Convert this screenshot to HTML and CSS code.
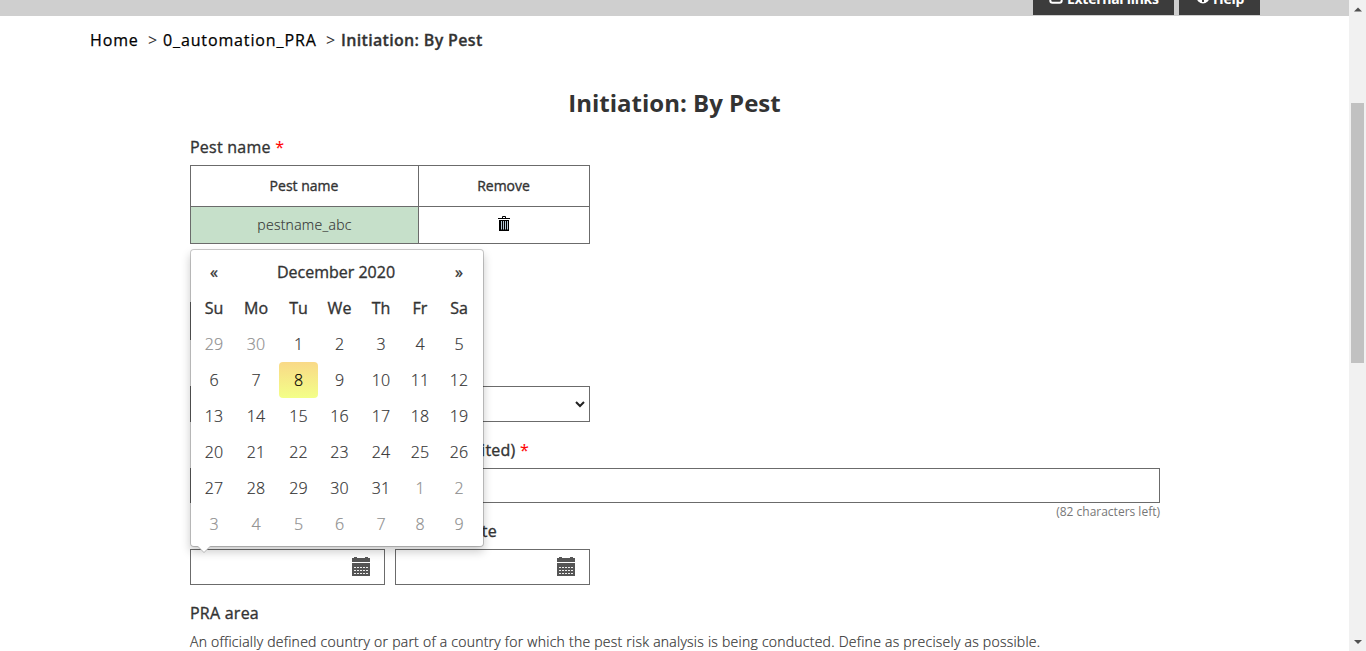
FILE: index.html
```html
<!DOCTYPE html>
<html lang="en">
<head>
<meta charset="utf-8">
<title>Initiation: By Pest</title>
<link rel="stylesheet" href="styles.css">
</head>
<body>
<div class="page">
  <header class="topbar">
    <a class="tab tab-links"><svg width="14" height="14" viewBox="0 0 14 14"><path d="M10 1H3Q1.300 1 1.300 3v7.500Q1.300 12.700 3.500 12.700h7Q12.700 12.700 12.700 10.500V8" fill="none" stroke="#fff" stroke-width="2"/></svg><span class="t-links">External links</span></a>
    <a class="tab tab-help"><svg width="14" height="14" viewBox="0 0 14 14"><circle cx="7" cy="7" r="6.500" fill="#fff"/><path d="M5 5Q5 3 7 3t2 2q0 1-2 2v1.500M7 9.800V12" fill="none" stroke="#3c3c3c" stroke-width="2"/></svg><span class="t-help">Help</span></a>
  </header>
  <nav class="crumbs"><a class="c-home">Home</a><span class="sep">&gt;</span><a class="c-pra">0_automation_PRA</a><span class="sep sep-last">&gt;</span><b class="c-now">Initiation: By Pest</b></nav>
  <main class="form">
    <h1>Initiation: By Pest</h1>
    <div class="label">Pest name <i class="req">*</i></div>
    <div class="table">
      <div class="cell th">Pest name</div>
      <div class="cell th">Remove</div>
      <div class="cell name">pestname_abc</div>
      <div class="cell trash"><svg width="12" height="15" viewBox="0 0 12 15"><path d="M4.500 2V.500h3V2" fill="none" stroke="#000"/><path d="M0 2h12v1H0zM1 4h10v11H1z" fill="#000"/><path d="M3.500 5v8.500M5.500 5v8.500M7.500 5v8.500M9.500 5v8.500" stroke="#b4c6d4"/></svg></div>
    </div>
    <div class="box hidden-field"></div>
    <div class="box select"><svg width="10" height="7" viewBox="0 0 10 7"><path d="M1 1l4 4 4-4" fill="none" stroke="#222" stroke-width="2"/></svg></div>
    <div class="label title-label">(limited) <i class="req">*</i></div>
    <div class="box title-input"></div>
    <div class="left">(82 characters left)</div>
    <div class="label date-label">Date</div>
    <div class="dates">
      <div class="box date"><svg class="cal" width="18" height="19" viewBox="0 0 18 19"><path d="M0 1h2V0h3v1h8V0h3v1h2v4H0zM0 6h18v13H0z"/><path class="holes" d="M2 10.500h14M2 13.500h14M2 16.500h14"/></svg></div>
      <div class="box date"><svg class="cal" width="18" height="19" viewBox="0 0 18 19"><path d="M0 1h2V0h3v1h8V0h3v1h2v4H0zM0 6h18v13H0z"/><path class="holes" d="M2 10.500h14M2 13.500h14M2 16.500h14"/></svg></div>
    </div>
    <div class="label area">PRA area</div>
    <p class="help">An officially defined country or part of a country for which the pest risk analysis is being conducted. Define as precisely as possible.</p>
    <section class="picker">
      <div class="days">
        <b>«</b><b class="month">December 2020</b><b>»</b>
        <b>Su</b><b>Mo</b><b>Tu</b><b>We</b><b>Th</b><b>Fr</b><b>Sa</b>
        <span class="off">29</span><span class="off">30</span><span>1</span><span>2</span><span>3</span><span>4</span><span>5</span>
        <span>6</span><span>7</span><span class="today">8</span><span>9</span><span>10</span><span>11</span><span>12</span>
        <span>13</span><span>14</span><span>15</span><span>16</span><span>17</span><span>18</span><span>19</span>
        <span>20</span><span>21</span><span>22</span><span>23</span><span>24</span><span>25</span><span>26</span>
        <span>27</span><span>28</span><span>29</span><span>30</span><span>31</span><span class="off">1</span><span class="off">2</span>
        <span class="off">3</span><span class="off">4</span><span class="off">5</span><span class="off">6</span><span class="off">7</span><span class="off">8</span><span class="off">9</span>
      </div>
      <svg class="arrow" width="14" height="8" viewBox="0 0 14 8"><path d="M0 0h14L7 7z" fill="#b5b5b5"/><path d="M1 0h12L7 6z" fill="#fff"/></svg>
    </section>
  </main>
</div>
<aside class="scroll">
  <svg width="8" height="5" viewBox="0 0 8 5"><path d="M0 4.500L4 .500l4 4z" fill="#505050"/></svg>
  <div class="thumb"></div>
  <svg class="down" width="8" height="5" viewBox="0 0 8 5"><path d="M0 0l4 4 4-4z" fill="#505050"/></svg>
</aside>
</body>
</html>
```
FILE: styles.css
```css
* { box-sizing: border-box; }
body {
  margin: 0;
  display: flex;
  height: 651px;
  overflow: hidden;
  background: #fff;
  color: #333;
  font-family: "Open Sans", sans-serif;
  font-size: 16px;
}
svg { display: block; flex: none; }
.page { width: 1349px; height: 651px; overflow: hidden; }
.topbar { height: 16px; background: #cfcfcf; display: flex; padding-left: 1033px; gap: 5px; align-items: flex-start; }
.tab {
  height: 15px; background: #3c3c3c; color: #fff; display: flex; overflow: hidden;
  font-weight: 700; font-size: 14px; line-height: 20px; white-space: nowrap;
}
.tab span { margin-top: -11px; letter-spacing: -.28px; }
.tab svg { margin-top: -10px; }
.tab-links { width: 141px; padding-left: 16px; gap: 4px; }
.tab-help { width: 81px; padding-left: 17px; gap: 3px; }
.crumbs { display: flex; height: 48px; padding-left: 90px; line-height: 48px; white-space: nowrap; color: #333; }
.crumbs a { color: #000; font-weight: 400; letter-spacing: .87px; -webkit-text-stroke: .25px #000; }
.c-home { width: 58px; }
.sep { width: 15px; }
.sep-last { padding-left: 1px; }
.c-pra { width: 162px; }
.c-now { font-weight: 600; letter-spacing: .33px; padding-left: 1px; -webkit-text-stroke: .3px #333; }
.form { position: relative; padding-left: 190px; }
h1 { margin: 0 0 0 -190px; text-align: center; font-size: 24px; line-height: 33px; padding-top: 22px; height: 72px; font-weight: 700; }
.label { line-height: 22px; height: 22px; white-space: nowrap; letter-spacing: .24px; -webkit-text-stroke: .35px #333; }
.req { color: #f00; font-style: normal; -webkit-text-stroke: .1px #f00; }
.table {
  width: 400px; height: 79px; margin-top: 7px; border: 1px solid #6b6b6b; background: #6b6b6b;
  display: grid; grid-template: 40px 36px / 227px 170px; gap: 1px; font-size: 14px;
}
.cell { display: flex; align-items: center; justify-content: center; background: #fff; padding-bottom: 2px; }
.trash { padding: 0 0 3px; }
.th { padding-right: 1px; -webkit-text-stroke: .35px #333; }
.cell.name { background: #c6e0ca; font-weight: 300; letter-spacing: .27px; -webkit-text-stroke: .15px #333; }
.box { border: 1px solid #6b6b6b; background: #fff; }
.hidden-field { width: 195px; height: 38px; margin-top: 58px; }
.select { width: 400px; height: 36px; margin-top: 46px; display: flex; justify-content: flex-end; align-items: center; padding-right: 4px; }
.title-label { width: 339px; text-align: right; margin-top: 17px; }
.title-input { width: 970px; height: 35px; margin-top: 7px; }
.left { width: 970px; text-align: right; height: 17px; line-height: 17px; font-size: 12px; color: #777; }
.date-label { width: 307px; text-align: right; }
.dates { display: flex; gap: 10px; margin-top: 7px; }
.date { width: 195px; height: 36px; display: flex; justify-content: flex-end; align-items: center; padding: 0 14px 2px 0; }
.cal { fill: #555; }
.holes { stroke: #eee; stroke-dasharray: 2 1; }
.area { margin-top: 17px; }
.help { margin: 7px 0 0; font-size: 14px; line-height: 22px; font-weight: 300; white-space: nowrap; letter-spacing: .25px; -webkit-text-stroke: .2px #333; }
.picker {
  position: absolute; left: 190px; top: 185px; width: 294px; height: 298px; padding: 4px;
  background: #fff; background-clip: padding-box; border: 1px solid rgba(0,0,0,.2); border-radius: 4px;
  box-shadow: 0 5px 10px rgba(0,0,0,.2);
}
.days { display: grid; grid-template-columns: 38px 46px 39px 43px 40px 38px 40px; grid-auto-rows: 36px; line-height: 36px; text-align: center; font-weight: 300; -webkit-text-stroke: .2px; }
.days b { font-weight: 400; -webkit-text-stroke: .35px #333; }
.month { grid-column: span 5; }
.off { color: #8e8e8e; }
.today { border-radius: 4px; background: linear-gradient(#f9d987, #f3ff88); color: #000; }
.arrow { position: absolute; left: 6px; bottom: -8px; }
.scroll { width: 17px; height: 651px; background: #f1f1f1; display: flex; flex-direction: column; align-items: center; padding-top: 7px; }
.thumb { width: 13px; height: 260px; margin-top: 91px; background: #c1c1c1; }
.down { margin-top: 277px; }
```
